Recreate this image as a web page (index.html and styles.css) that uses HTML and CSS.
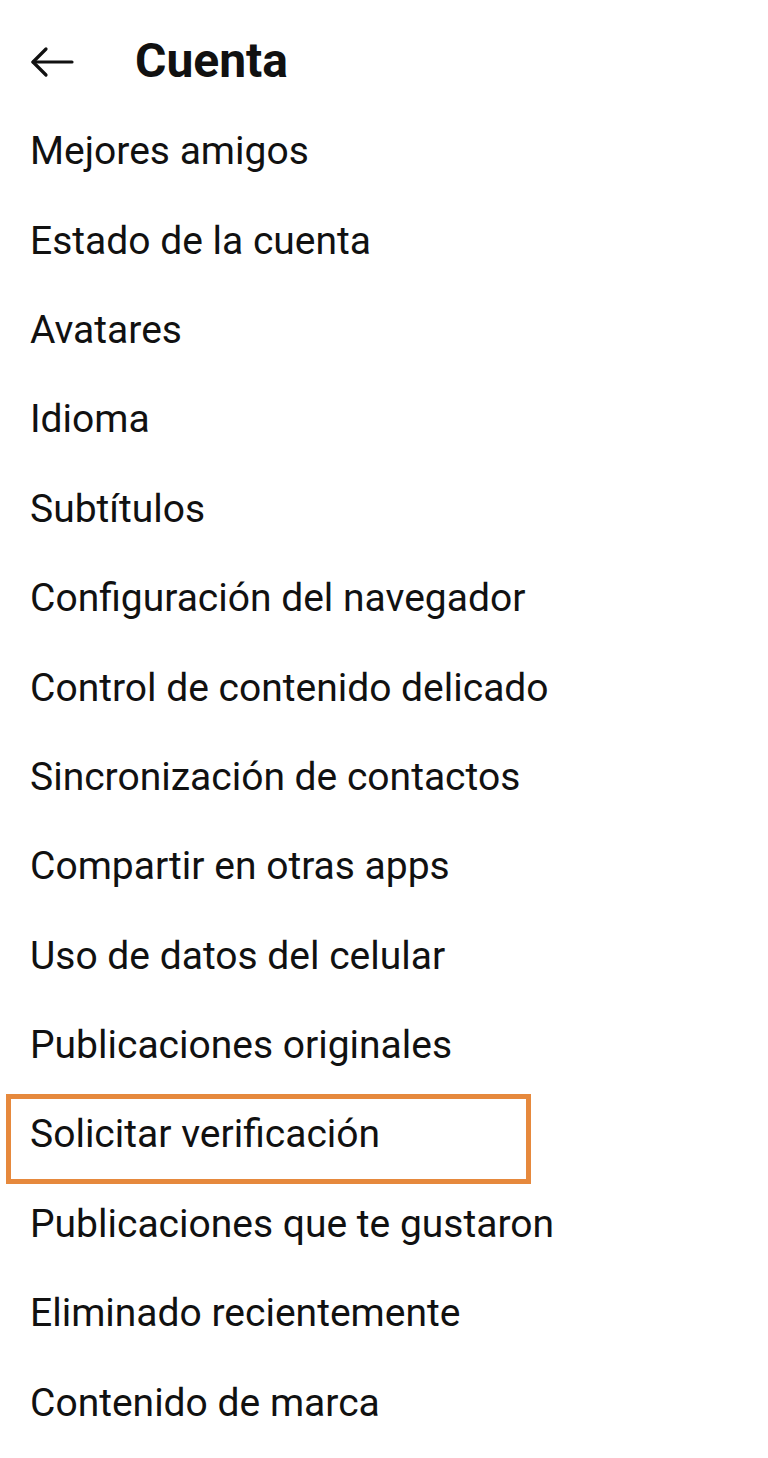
FILE: index.html
```html
<!DOCTYPE html>
<html lang="es">
<head>
<meta charset="utf-8">
<title>Cuenta</title>
<link rel="stylesheet" href="styles.css">
</head>
<body>
<div class="screen">
  <header class="topbar">
    <span class="back" aria-label="Atrás">
      <svg width="44" height="32" viewBox="0 0 44 32" fill="none" stroke="#111" stroke-width="3.2" stroke-linecap="round" stroke-linejoin="round">
        <path d="M3 16 H42"/>
        <path d="M16 3 L3 16 L16 29"/>
      </svg>
    </span>
    <h1 class="title">Cuenta</h1>
  </header>
  <ul class="menu">
    <li class="item">Mejores amigos</li>
    <li class="item">Estado de la cuenta</li>
    <li class="item">Avatares</li>
    <li class="item">Idioma</li>
    <li class="item">Subtítulos</li>
    <li class="item">Configuración del navegador</li>
    <li class="item">Control de contenido delicado</li>
    <li class="item">Sincronización de contactos</li>
    <li class="item">Compartir en otras apps</li>
    <li class="item">Uso de datos del celular</li>
    <li class="item">Publicaciones originales</li>
    <li class="item highlighted"><span class="hl-box">Solicitar verificación</span></li>
    <li class="item">Publicaciones que te gustaron</li>
    <li class="item">Eliminado recientemente</li>
    <li class="item">Contenido de marca</li>
  </ul>
</div>
</body>
</html>
```

FILE: styles.css
```css
html, body {
  margin: 0;
  padding: 0;
  background: #ffffff;
}
body {
  font-family: Roboto, "Liberation Sans", Arial, sans-serif;
  color: #111111;
  width: 768px;
  height: 1458px;
  overflow: hidden;
}
.screen {
  display: flex;
  flex-direction: column;
}
.topbar {
  display: flex;
  align-items: center;
  height: 62px;
  margin-top: 31px;
  padding-left: 30px;
}
.back {
  display: flex;
  width: 44px;
  height: 32px;
}
.title {
  margin: 0 0 0 61px;
  padding-bottom: 3px;
  font-size: 48px;
  font-weight: 700;
  letter-spacing: 0;
  line-height: 1;
}
.menu {
  list-style: none;
  margin: 14px 0 0 0;
  padding: 0;
  display: flex;
  flex-direction: column;
}
.item {
  height: 89.4px;
  display: flex;
  align-items: center;
  padding-left: 30px;
  font-size: 39px;
  line-height: 1;
}
.item.highlighted {
  padding-left: 6px;
  align-items: flex-start;
}
.hl-box {
  box-sizing: border-box;
  width: 525px;
  height: 90px;
  margin-top: 3.6px;
  display: flex;
  align-items: center;
  padding-left: 19px;
  padding-bottom: 8px;
  border: 5px solid #e6893d;
}
```
